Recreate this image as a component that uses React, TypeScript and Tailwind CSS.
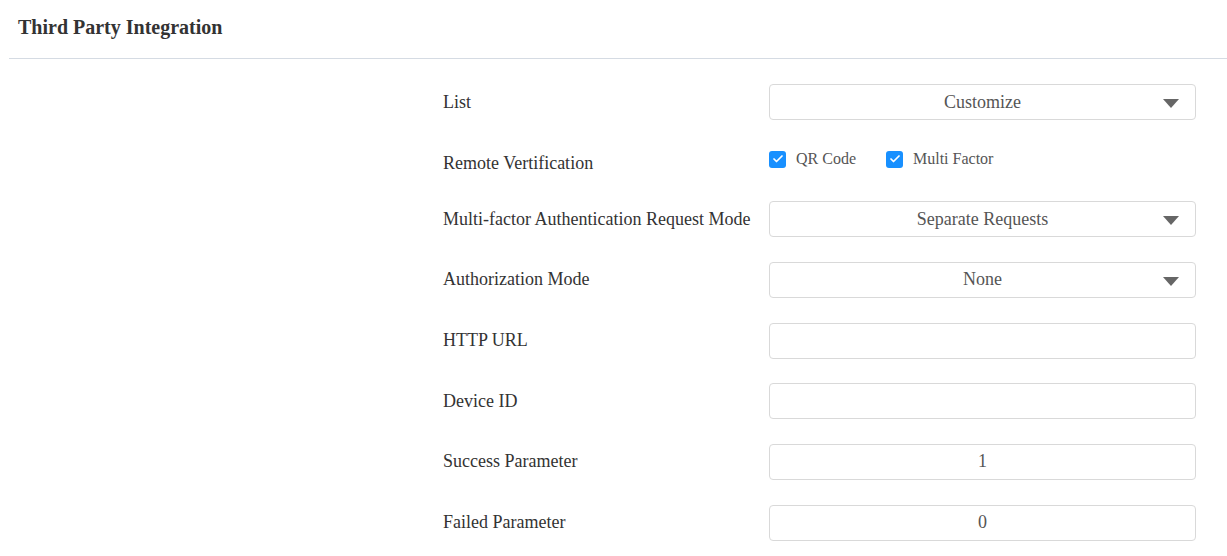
import { Check } from "lucide-react";

const serif = { fontFamily: '"Liberation Serif", "Times New Roman", serif' };

function Caret() {
  return (
    <svg width="16" height="9" viewBox="0 0 16 9" className="absolute right-[16px] top-[14px]">
      <path d="M0 0 H16 L8 9 Z" fill="#666" />
    </svg>
  );
}

function SelectBox({ value }: { value: string }) {
  return (
    <div className="relative w-[427px] h-[36px] border border-[#d9d9d9] rounded-[4px] bg-white flex items-center justify-center text-[18px] text-[#555]">
      {value}
      <Caret />
    </div>
  );
}

function TextBox({ value = "" }: { value?: string }) {
  return (
    <div className="w-[427px] h-[36px] border border-[#d9d9d9] rounded-[4px] bg-white flex items-center justify-center text-[18px] text-[#555]">
      {value}
    </div>
  );
}

function CheckItem({ label }: { label: string }) {
  return (
    <label className="flex items-center gap-[10px] text-[16px] text-[#555]">
      <span className="w-[17px] h-[17px] rounded-[3px] bg-[#1890ff] flex items-center justify-center">
        <Check className="w-[12px] h-[12px] text-white" strokeWidth={3.5} />
      </span>
      {label}
    </label>
  );
}

function Row({ label, children, h = "h-[36px]" }: { label: string; children: React.ReactNode; h?: string }) {
  return (
    <div className={`flex items-center ${h}`}>
      <div className="w-[326px] text-[18px] text-[#333]">{label}</div>
      {children}
    </div>
  );
}

export default function App() {
  return (
    <main className="min-h-screen w-[1227px] bg-white" style={serif}>
      <div className="ml-[9px] h-[59px] border-b border-[#d5dbe3] pl-[9px] pt-[15px]">
        <h1 className="text-[20px] font-bold text-[#333] leading-[24px]">Third Party Integration</h1>
      </div>

      <div className="pl-[443px] pt-[25px] flex flex-col gap-[24.66px]">
        <Row label="List">
          <SelectBox value="Customize" />
        </Row>
        <div className="flex h-[32px]">
          <div className="w-[326px] text-[18px] text-[#333] pt-[5px]">Remote Vertification</div>
          <div className="flex items-center gap-[30px] pb-[3px]">
            <CheckItem label="QR Code" />
            <CheckItem label="Multi Factor" />
          </div>
        </div>
        <Row label="Multi-factor Authentication Request Mode">
          <SelectBox value="Separate Requests" />
        </Row>
        <Row label="Authorization Mode">
          <SelectBox value="None" />
        </Row>
        <Row label="HTTP URL">
          <TextBox />
        </Row>
        <Row label="Device ID">
          <TextBox />
        </Row>
        <Row label="Success Parameter">
          <TextBox value="1" />
        </Row>
        <Row label="Failed Parameter">
          <TextBox value="0" />
        </Row>
      </div>
    </main>
  );
}
